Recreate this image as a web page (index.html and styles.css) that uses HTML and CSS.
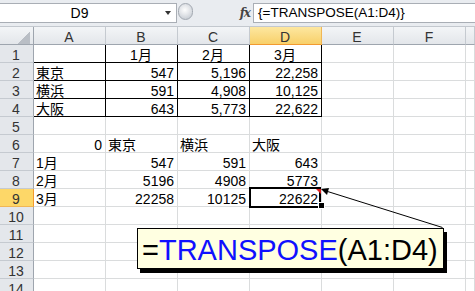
FILE: index.html
```html
<!DOCTYPE html>
<html lang="ja">
<head>
<meta charset="UTF-8">
<title>TRANSPOSE</title>
<link rel="stylesheet" href="styles.css">
</head>
<body>
<div class="formula-bar">
    <div class="name-box">
        <span class="name-text">D9</span>
        <span class="drop"><span class="drop-arrow"></span></span>
    </div>
    <div class="splitter"><span class="knob"></span></div>
    <div class="fx-area"><span class="fx">fx</span></div>
    <div class="formula-input">{=TRANSPOSE(A1:D4)}</div>
</div>

<div class="sheet">
    <div class="hd corner"><span class="corner-tri"></span></div>
    <div class="hd hc">A</div><div class="hd hc">B</div><div class="hd hc">C</div><div class="hd hc on">D</div><div class="hd hc">E</div><div class="hd hc">F</div><div class="hd hc"></div>

    <div class="hd rh">1</div><div class="c box"></div><div class="c box mid">1月</div><div class="c box mid">2月</div><div class="c box mid">3月</div><div class="c"></div><div class="c"></div><div class="c"></div>
    <div class="hd rh">2</div><div class="c box">東京</div><div class="c box num">547</div><div class="c box num">5,196</div><div class="c box num">22,258</div><div class="c"></div><div class="c"></div><div class="c"></div>
    <div class="hd rh">3</div><div class="c box">横浜</div><div class="c box num">591</div><div class="c box num">4,908</div><div class="c box num">10,125</div><div class="c"></div><div class="c"></div><div class="c"></div>
    <div class="hd rh">4</div><div class="c box">大阪</div><div class="c box num">643</div><div class="c box num">5,773</div><div class="c box num">22,622</div><div class="c"></div><div class="c"></div><div class="c"></div>
    <div class="hd rh">5</div><div class="c"></div><div class="c"></div><div class="c"></div><div class="c"></div><div class="c"></div><div class="c"></div><div class="c"></div>
    <div class="hd rh">6</div><div class="c num">0</div><div class="c">東京</div><div class="c">横浜</div><div class="c">大阪</div><div class="c"></div><div class="c"></div><div class="c"></div>
    <div class="hd rh">7</div><div class="c">1月</div><div class="c num">547</div><div class="c num">591</div><div class="c num">643</div><div class="c"></div><div class="c"></div><div class="c"></div>
    <div class="hd rh">8</div><div class="c">2月</div><div class="c num">5196</div><div class="c num">4908</div><div class="c num">5773</div><div class="c"></div><div class="c"></div><div class="c"></div>
    <div class="hd rh on">9</div><div class="c">3月</div><div class="c num">22258</div><div class="c num">10125</div><div class="c num sel">22622<span class="note-mark"></span></div><div class="c"></div><div class="c"></div><div class="c"></div>
    <div class="hd rh">10</div><div class="c"></div><div class="c"></div><div class="c"></div><div class="c"></div><div class="c"></div><div class="c"></div><div class="c"></div>
    <div class="hd rh">11</div><div class="c"></div><div class="c"></div><div class="c"></div><div class="c"></div><div class="c"></div><div class="c"></div><div class="c"></div>
    <div class="hd rh">12</div><div class="c"></div><div class="c"></div><div class="c"></div><div class="c"></div><div class="c"></div><div class="c"></div><div class="c"></div>
    <div class="hd rh">13</div><div class="c"></div><div class="c"></div><div class="c"></div><div class="c"></div><div class="c"></div><div class="c"></div><div class="c"></div>
    <div class="hd rh">14</div><div class="c"></div><div class="c"></div><div class="c"></div><div class="c"></div><div class="c"></div><div class="c"></div><div class="c"></div>
</div>

<!-- callout pointing at D9 -->
<svg class="leader" width="475" height="291" viewBox="0 0 475 291">
    <line x1="442.5" y1="227.5" x2="326" y2="191" stroke="#000" stroke-width="1"/>
    <polygon points="321,189 329,188 327,195" fill="#000"/>
</svg>
<div class="callout">=<span class="fn">TRANSPOSE</span>(A1:D4)</div>
</body>
</html>
```

FILE: styles.css
```css
body {
    margin: 0;
    height: 291px;
    overflow: hidden;
    position: relative;
    background: #fff;
    color: #000;
    font-family: "Liberation Sans", "Noto Sans CJK JP", sans-serif;
    font-size: 14px;
}

/* formula bar */
.formula-bar {
    display: flex;
    align-items: flex-start;
    height: 27px;
    padding-top: 3px;
    box-sizing: border-box;
    background: #e9ecf0;
    border-bottom: 1px solid #c3c8ce;
}
.name-box {
    display: flex;
    align-items: center;
    width: 177px;
    height: 20px;
    box-sizing: border-box;
    background: #fff;
    border: 1px solid #a9aeb5;
    border-left: none;
}
.name-text {
    width: 159px;
    text-align: center;
    line-height: 18px;
}
.drop {
    display: flex;
    justify-content: center;
    width: 17px;
}
.drop-arrow {
    width: 0;
    height: 0;
    border-left: 3px solid transparent;
    border-right: 3px solid transparent;
    border-top: 4px solid #333;
}
.splitter {
    width: 17px;
    display: flex;
    justify-content: center;
}
.knob {
    display: flex;
    width: 15px;
    height: 17px;
    box-sizing: border-box;
    border: 1px solid #a3a9b1;
    border-radius: 8px;
    background: radial-gradient(circle at 45% 40%, #fdfdfd 0, #e8eaed 35%, #c9ced5 80%);
}
.fx-area {
    width: 59px;
    height: 20px;
    display: flex;
    justify-content: flex-end;
    align-items: center;
    padding-right: 3px;
    box-sizing: border-box;
}
.fx {
    font-family: "DejaVu Serif", serif;
    font-style: italic;
    font-weight: bold;
    font-size: 12px;
    color: #444;
    letter-spacing: -1px;
}
.formula-input {
    flex: 1;
    height: 20px;
    box-sizing: border-box;
    background: #fff;
    border: 1px solid #a9aeb5;
    border-right: none;
    padding-left: 4px;
    font-size: 13.5px;
    line-height: 18px;
}

/* grid */
.sheet {
    display: grid;
    grid-template-columns: 34px repeat(6, 72px) 1fr;
    grid-auto-rows: 18px;
}
.sheet > div {
    box-sizing: border-box;
    padding: 2px 3px 0 2px;
    line-height: 16px;
    white-space: nowrap;
}
.c {
    border-right: 1px solid #dadcdd;
    border-bottom: 1px solid #dadcdd;
}
.num {
    text-align: right;
}
.mid {
    text-align: center;
}
.box {
    border-right-color: #000;
    border-bottom-color: #000;
}

.hd {
    background: linear-gradient(#f3f5f7, #e3e6ea);
    color: #333;
    text-align: center;
    border-right: 1px solid #c5cad0;
    border-bottom: 1px solid #c5cad0;
}
.hc {
    border-bottom-color: #9ea5ae;
}
.rh {
    background: #e4e7eb;
    border-right-color: #9ea5ae;
    padding: 2px 0 0 0;
}
.hc.on {
    background: linear-gradient(#fde7a0, #f8d06a);
    border-right-color: #f0b655;
    border-bottom-color: #f29a30;
}
.rh.on {
    background: #fdd768;
    border-right-color: #f29a30;
    border-bottom-color: #f0b655;
}
.corner {
    display: flex;
    justify-content: flex-end;
    align-items: flex-end;
    border-right-color: #9ea5ae;
    border-bottom-color: #9ea5ae;
    padding: 0 2px 2px 0;
}
.corner-tri {
    width: 12px;
    height: 12px;
    background: linear-gradient(135deg, transparent 50%, #b9bec5 50%);
}

/* active cell */
.sel {
    position: relative;
}
.sel::before {
    content: "";
    position: absolute;
    left: -1px;
    top: -2px;
    width: 72px;
    height: 21px;
    box-sizing: border-box;
    border: 2px solid #000;
}
.sel::after {
    content: "";
    position: absolute;
    left: 69px;
    top: 14px;
    width: 5px;
    height: 5px;
    background: #000;
    outline: 1px solid #fff;
}
.note-mark {
    position: absolute;
    right: 0;
    top: 0;
    width: 0;
    height: 0;
    border-left: 5px solid transparent;
    border-top: 5px solid #e02020;
}

/* callout */
.leader {
    position: absolute;
    left: 0;
    top: 0;
    pointer-events: none;
}
.callout {
    position: absolute;
    left: 137px;
    top: 228px;
    width: 307px;
    height: 41px;
    box-sizing: border-box;
    padding: 3px 0 0 4px;
    background: #ffffe1;
    border: 1px solid #000;
    box-shadow: 3px 4px 0 #000;
    font-size: 29px;
    line-height: 36px;
    white-space: nowrap;
}
.fn {
    color: #1010ff;
}
```
